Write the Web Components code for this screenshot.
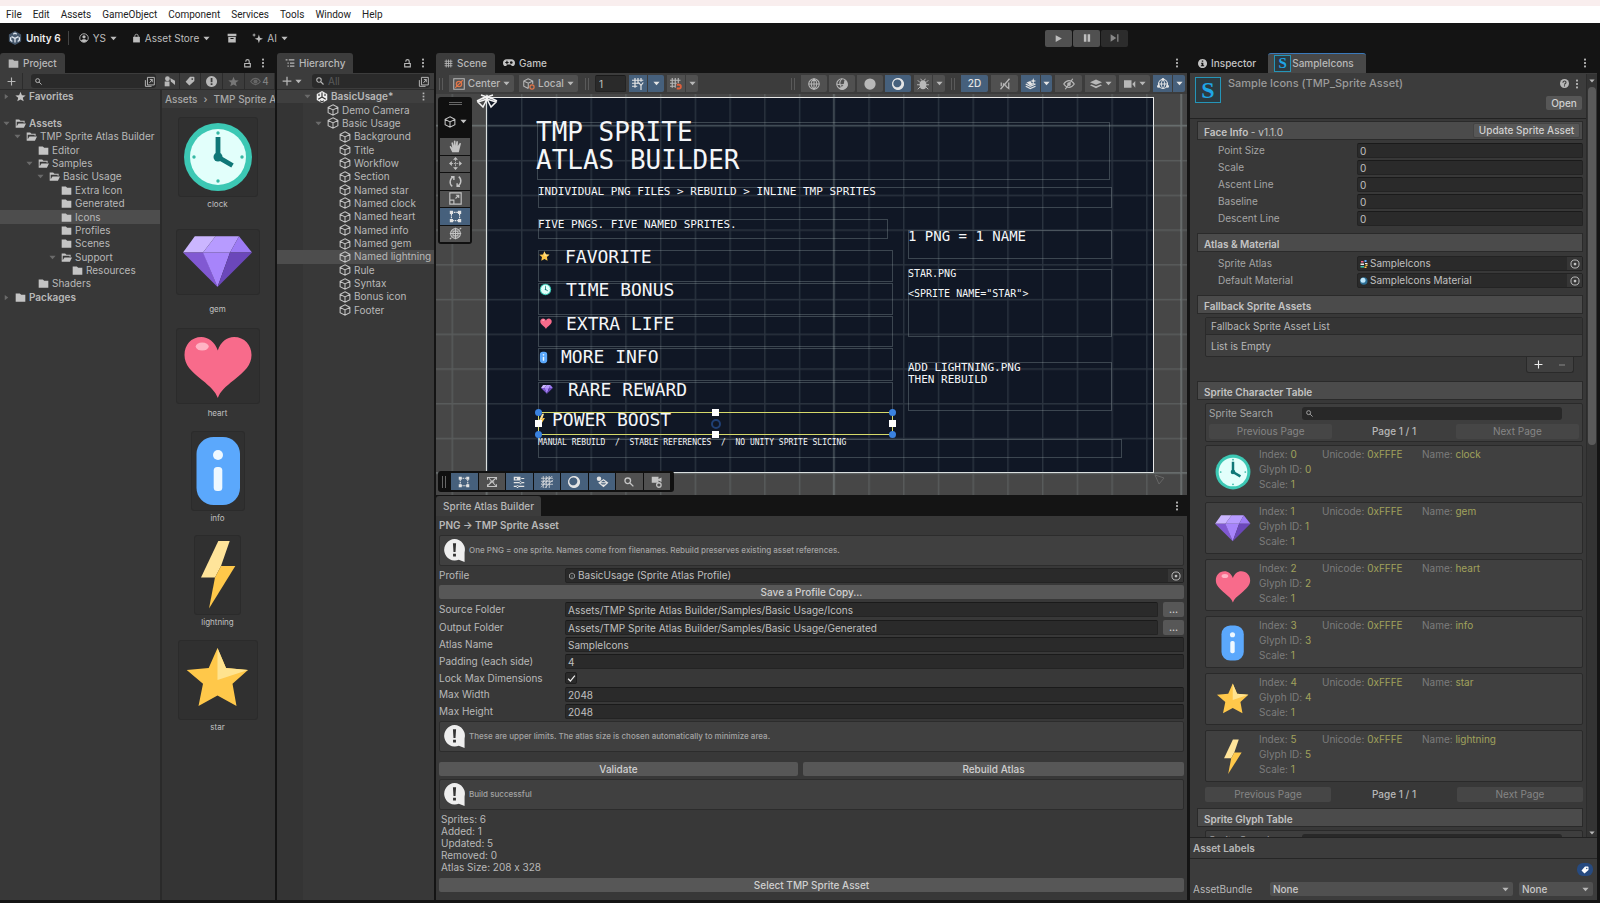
<!DOCTYPE html>
<html lang="en">
<head>
<meta charset="utf-8">
<title>BasicUsage - Unity 6</title>
<style>
html,body{margin:0;height:100%;background:#141414}
body{font:10px/13px Inter,"Liberation Sans",sans-serif;font-variant-ligatures:no-contextual;color:#b8b8b8;overflow:hidden}
</style>
</head>
<body>
<editor-app></editor-app>
<script>
const CSS = `
*{box-sizing:border-box}
:host{display:block}
button,input,select{font:inherit;color:inherit;margin:0;padding:0;border:0;background:none;border-radius:0;outline:0;min-width:0}
button{display:flex;align-items:center;justify-content:center;white-space:nowrap}
label,span,h2,h3{white-space:nowrap}
h2,h3{margin:0;font-size:10px}
input.f{display:block;width:100%;height:15px;background:#2a2a2a;border:1px solid #232323;border-top-color:#1a1a1a;border-radius:2px;padding:0 0 0 2px;color:#c0c0c0}
.b{background:#575757;border-radius:2px;color:#d0d0d0;font-weight:500}
.strip{display:flex;height:20px;background:#141414;align-items:center}
.grow{flex:1;min-width:0}
.bar{display:flex;background:#3c3c3c;align-items:center}
.i{display:flex;align-items:center}
`;
class Base extends HTMLElement{
  constructor(){super();this.attachShadow({mode:'open'})}
  connectedCallback(){this.shadowRoot.innerHTML='<style>'+CSS+(this.css?this.css():'')+'</style>'+this.view()}
}
const S='fill="none" stroke="currentColor" stroke-width="1.4"';
const ICONS={
 caret:'<path d="M1 4h14l-7 8z"/>',
 right:'<path d="M4 2v12l8-6z"/>',
 dots:'<rect x="6.5" y="1" width="3" height="3"/><rect x="6.5" y="6.5" width="3" height="3"/><rect x="6.5" y="12" width="3" height="3"/>',
 lock:'<path '+S.replace('1.4','2')+' d="M3 8h10v6H3zM5 5V4a3 3 0 0 1 6 0v4"/>',
 plus:'<path d="M7 1h2v6h6v2H9v6H7V9H1V7h6z"/>',
 minus:'<path d="M2 7h12v2H2z"/>',
 search:'<path fill="none" stroke="currentColor" stroke-width="2.2" d="M9.5 9.5L15 15M10.500 6a4.500 4.500 0 1 1-9 0a4.500 4.500 0 0 1 9 0z"/>',
 popout:'<path '+S+' d="M5 2h10v11H5zM2 6v9h9M8 10l4-5M8.500 5H12v4"/>',
 folder:'<path d="M1 2h6l2 2h6v10H1z"/>',
 open:'<path d="M1 14V2h5l2 2h6v3h-1.500V5.500h-10V12L5 8h11l-3 6z"/>',
 star:'<path d="M8 1l2 5 5.500.4-4.200 3.500L12.700 15 8 12.200 3.300 15l1.400-5.100L.5 6.400 6 6z"/>',
 cube:'<path '+S+' d="M8 1l6.500 3.500v7L8 15l-6.500-3.500v-7zM1.500 4.500L8 8l6.500-3.500M8 8v7"/>',
 unity:'<path d="M8 0l7 4v8l-7 4-7-4V4z"/><path fill="none" stroke="#333" stroke-width="1.500" d="M8 8V2M8 8l-5 3M8 8l5 3M4 3.500v3M12 3.500v3M5.500 13L8 14.500l2.500-1.500"/>',
 logo:'<path fill="#46586c" d="M8 0l7 4v8l-7 4-7-4V4z"/><path fill="none" stroke="#dfe6ee" stroke-width="1.500" d="M8 8.500V13M8 8.500L4 6.500M8 8.500l4-2M6 3.500l2-1 2 1M3 7v3.500L5 12M13 7v3.500L11 12"/>',
 user:'<circle cx="8" cy="8" r="6.800" '+S+'/><circle cx="8" cy="6" r="2.600"/><path d="M3 12.500c1-3.500 9-3.500 10 0a7 7 0 0 1-10 0z"/>',
 bag:'<path d="M2 5h12v10H2z"/><path '+S+' d="M5 6V3.500a3 3 0 0 1 6 0V6"/>',
 archive:'<path d="M1 1h14v4H1zM2 6.500h12V15H2zM5.500 8v1.500h5V8z" fill-rule="evenodd"/>',
 spark:'<path d="M10 2l1.500 5L16 8.500 11.500 10 10 15 8.500 10 4 8.500 8.500 7zM3 0l.8 2.200L6 3l-2.200.8L3 6l-.8-2.200L0 3l2.200-.8z"/>',
 play:'<path d="M3 2v12l11-6z"/>',
 pause:'<path d="M3 2h4v12H3zM9 2h4v12H9z"/>',
 step:'<path d="M1 2v12l9-6z"/><path d="M11.500 2h2v12h-2z"/>',
 shapes:'<rect x="1" y="8" width="7" height="7"/><circle cx="5" cy="4" r="3.500"/><path d="M9 3l7 4v6l-6-5z"/>',
 tag:'<path d="M8 1h6l1 1v6l-8 7-6-6zM11.500 3.500a1.300 1.300 0 1 0 .1 0z" fill-rule="evenodd"/>',
 alert:'<path fill-rule="evenodd" d="M8 0a8 8 0 1 0 .1 0zM6.800 3h2.600v6H6.800zM6.800 10.500h2.600V13H6.800z"/>',
 info:'<path fill-rule="evenodd" d="M8 0a8 8 0 1 0 .1 0zM6.700 2.500h2.600V5H6.700zM5.500 6.500h4V11H11v2H5v-2h1.500V8.500h-1z"/>',
 help:'<circle cx="8" cy="8" r="8"/><path fill="none" stroke="#3c3c3c" stroke-width="1.900" d="M5.300 6.500C5.300 2.500 11 3 10.600 6.400 10.400 8 8 8 8 10M8 11.300v2"/>',
 eye:'<path fill="none" stroke="currentColor" stroke-width="1.600" d="M1 8c4-6 10-6 14 0-4 6-10 6-14 0z"/><circle cx="8" cy="8" r="3"/>',
 eyeoff:'<path fill="none" stroke="currentColor" stroke-width="1.600" d="M1 8c4-6 10-6 14 0-4 6-10 6-14 0zM13 1L3 15"/><circle cx="8" cy="8" r="2.500"/>',
 list:'<path d="M1 2h3v2H1zM6 2h9v2H6zM4 7h2v2H4zM8 7h7v2H8zM4 12h2v2H4zM8 12h7v2H8z"/>',
 hash:'<path fill="none" stroke="currentColor" stroke-width="1.500" d="M4 1v14M8 1v14M12 1v14M1 4h14M1 8h14M1 12h14"/>',
 pad:'<path fill-rule="evenodd" d="M5 3h6c7 0 6 10 1 9l-2-2H6l-2 2C-1 13-2 3 5 3zM4.500 5v1.500H3V8h1.500v1.500H6V8h1.500V6.500H6V5zM11 5.500a1.800 1.800 0 1 0 .1 0z"/>',
 center:'<path '+S+' d="M1 1h14v14H1z"/><circle cx="8" cy="8" r="3.500" fill="none" stroke="#e0764a" stroke-width="1.800"/><path stroke="#e0764a" stroke-width="1.500" d="M3 13l10-10"/>',
 local:'<path '+S+' d="M7 1l6 3v4M7 14l-6-3V4l6-3M1 4l6 3 6-3M7 7v7"/><circle cx="12" cy="12" r="2.800" fill="none" stroke="#e0764a" stroke-width="1.600"/>',
 gridy:'<path fill="none" stroke="currentColor" stroke-width="1.600" d="M4 0v13M8 0v8M12 0v5M0 3h15M0 7h8M0 11h7M9 6l3 4 3-4M12 10v6"/>',
 magnet:'<path fill="none" stroke="currentColor" stroke-width="1.500" d="M3 0v13M7 0v13M11 0v7M0 3h14M0 7h9M0 11h7"/><path fill="none" stroke="#e0603c" stroke-width="2.400" d="M9 9h3a2.500 2.500 0 0 1 0 5H9"/>',
 globe:'<circle cx="8" cy="8" r="7" '+S+'/><path '+S+' d="M8 1v14M1 8h14M8 1c-5 4-5 10 0 14M8 1c5 4 5 10 0 14"/>',
 shade:'<circle cx="8" cy="8" r="7" '+S+'/><path d="M15 6a7 7 0 0 1-12 7c5 0 8-3 8-10 2 0 3 1 4 3z"/><path '+S+' d="M8 1c-4 4-4 7-1 11M1 8c4 2 7 1 11 0"/>',
 ball:'<circle cx="8" cy="8" r="7.500"/>',
 moon:'<path fill-rule="evenodd" d="M8 0a8 8 0 1 0 .1 0zM7 1.500a5.500 5.500 0 1 1-.1 0z"/><circle cx="8" cy="8" r="7" fill="none" stroke="currentColor"/>',
 bug:'<ellipse cx="8" cy="9" rx="4.500" ry="6"/><path fill="none" stroke="currentColor" stroke-width="1.300" d="M4 6L1 3M12 6l3-3M4 9H0M12 9h4M4 12l-3 3M12 12l3 3M6 3L5 1M10 3l1-2"/>',
 mute:'<path fill="none" stroke="currentColor" stroke-width="1.700" d="M14 1L2 15M3 6v5M6 7v3M9 9v2M13 6v8l-4-3"/>',
 fx:'<path fill="none" stroke="currentColor" stroke-width="1.600" d="M1 11l6 3 7-3M1 8l6 3 7-3"/><path d="M2 6l5-2 2 3 5 0-7 3zM11 0l1 3 3 1-3 1-1 3-1-3-3-1 3-1z"/>',
 layers:'<path d="M8 2l8 3.500L8 9 0 5.500z"/><path d="M2 8.500l6 2.500 6-2.500 2 1L8 13.500 0 9.500z"/>',
 camera:'<path d="M0 3h10v10H0zM11 8l4-4v9z"/>',
 gizmo:'<circle cx="8" cy="8" r="6" fill="none" stroke="currentColor" stroke-width="1.600"/><path fill="none" stroke="currentColor" stroke-width="1.300" d="M8 2c-3 4-3 8 0 12M2 8h12M8 2c3 4 3 8 0 12"/><circle cx="8" cy="1.800" r="1.800"/><circle cx="2" cy="11" r="2"/><circle cx="14" cy="11" r="2"/>',
 hand:'<path d="M4 15L1 9c-.5-1.500 1-2 1.700-1L4 9.500 3 4c0-1.500 1.700-1.500 2-.2L6 7V1.500c0-1.300 2-1.300 2 0V7l1-5c.3-1.300 2-1 2 .3L10.800 7.500 13 4c.8-1 2-.2 1.600 1L12 15z"/>',
 move:'<path d="M8 0l3 3.500H5zM8 16l3-3.500H5zM0 8l3.500-3v6zM16 8l-3.500-3v6z"/><path stroke="currentColor" stroke-dasharray="2 1" d="M8 3v10M3 8h10"/>',
 rotate:'<path fill="none" stroke="currentColor" stroke-width="1.700" d="M4 14A7 7 0 0 1 6 2M12 2a7 7 0 0 1-2 12M2.500 2H6v4M13.500 14H10v-4"/>',
 scale:'<path '+S+' d="M1 1h14v14H1zM1 10h5v5M8 8l4-4M8.500 4H12v3.500"/>',
 rect:'<path '+S+' stroke-dasharray="2 1" d="M3 3h10v10H3z"/><path d="M1 1h4v4H1zM11 1h4v4h-4zM1 11h4v4H1zM11 11h4v4h-4z"/>',
 transform:'<circle cx="8" cy="8" r="6" '+S+'/><path '+S+' d="M8 1v14M1 8h14M5 5h6v6H5zM13 3l2-2M1 15l2-2"/>',
 sigma:'<path '+S+' d="M2 5V2h12v3M2 11v3h12v-3M2 13L13 3M4 3l9 10M5 8h6"/>',
 sliders:'<path fill-rule="evenodd" d="M1 1h9v5H1zM3 2.500h2v2H3zM11 2.500h4v1.500h-4zM1 8h14v1.500H1zM9 7h2v4H9zM1 13h14v1.500H1zM5 12h2v4H5z"/>',
 hatch:'<path fill="none" stroke="currentColor" d="M3 0v16M7 0v16M11 0v16M0 3h16M0 7h16M0 11h16M0 15L15 0M5 16L16 5M1 10L10 1"/>',
 diamonds:'<circle cx="4" cy="3.500" r="3"/><path '+S+' d="M10 5l5.500 4-5.500 5-6-5zM4 9h11M7 12h6"/>',
 camgear:'<path d="M1 1h9v8H1zM10 4l4-2v6l-4-2z"/><circle cx="10.500" cy="12" r="3" fill="none" stroke="currentColor" stroke-width="1.700"/>',
 target:'<circle cx="8" cy="8" r="6.500" fill="none" stroke="currentColor" stroke-width="1.500"/><circle cx="8" cy="8" r="2.200"/>',
 check:'<path fill="none" stroke="currentColor" stroke-width="2.200" d="M2 8.500l4 4L14 3"/>',
 so:'<path '+S+' stroke="#3f6f74" d="M3 5l5-3 5 3v6l-5 3-5-3z"/><path fill="#4b5658" d="M6 6h4v1.500H7.500V9H10v3H6v-1.500h2.500V10H6z"/>',
 atlas:'<path fill="#eee" d="M1 7h7v3H1zM10 6h5v2h-5z"/><path fill="#f86b8b" d="M2 2h5v3H2z"/><path fill="#3cc8b4" d="M1 12h7v3H1z"/><path fill="#5ba8fc" d="M9 0h4v4H9z"/><path fill="#ffc84a" d="M11 9h4v3h-4zM9 13h4v3H9z"/>',
 material:'<circle cx="7.500" cy="8" r="7.500" fill="#2c6f96"/><circle cx="6" cy="6.500" r="5" fill="#bfe6fa"/>',
 bubble:'<path fill="#eee" d="M8 0a7.500 7.500 0 0 1 7 9.500V16l-4-1.500A7.500 7.500 0 1 1 8 0z"/><path fill="#333" d="M6.900 3h2.200l-.4 6H7.300zM7 10.200h2v2H7z"/>'
};
class UiIcon extends Base{
  css(){const s=this.getAttribute('s')||12;return `:host{display:inline-flex;flex:none;width:${s}px;height:${s}px}svg{width:100%;height:100%;overflow:visible;fill:currentColor}`}
  view(){return `<svg viewBox="0 0 16 16" aria-hidden="true">${ICONS[this.getAttribute('n')]}</svg>`}
}
customElements.define('ui-icon',UiIcon);
const ic=(n,s=12,c='')=>`<ui-icon n="${n}" s="${s}"${c?` style="color:${c}"`:''}></ui-icon>`;

const ART={
 clock:[78,78,'<circle cx="39" cy="39" r="34" fill="#3cc8b4"/><circle cx="39" cy="39" r="28" fill="#e2fffb"/><g fill="#36b8a4"><circle cx="39" cy="15" r="1.700"/><circle cx="63" cy="39" r="1.700"/><circle cx="39" cy="63" r="1.700"/><circle cx="15" cy="39" r="1.700"/></g><path d="M39 19v20l14.500 8.500" fill="none" stroke="#0f7777" stroke-width="4.800"/><circle cx="39" cy="39" r="4.500" fill="#0f7777"/>',[40,40],[13,13]],
 gem:[82,64,'<path fill="#cbb6ff" d="M6 22.600L17.800 6.300H38.500L26 22.600z"/><path fill="#b79bff" d="M38.500 6.300H62L53 22.600H26z"/><path fill="#9d7bf5" d="M62 6.300L75 22.600H53z"/><path fill="#8159d2" d="M6 22.600h20.500L40.500 57z"/><path fill="#a784fb" d="M26 22.600h27L40.500 57z"/><path fill="#6b47ba" d="M53 22.600h22L40.500 57z"/>',[42,33],[14,11]],
 heart:[82,74,'<path fill="#f86b8b" d="M40.800 21.500C38 13 31 8 24.500 8 14 8 7.500 16 7.500 26c0 10 6.500 16 17.500 25 8 6.500 13.500 11.500 15.800 18 2.300-6.500 7.800-11.500 16.200-18 11-9 17.500-15 17.500-25C74.500 16 67.500 8 57 8c-7 0-13.500 5-16.200 13.500z"/><ellipse cx="25.200" cy="17.500" rx="6.500" ry="4" fill="#ffb3c4"/>',[42,38],[14,13]],
 info:[52,78,'<rect x="4.500" y="5" width="43.500" height="68" rx="17" fill="#5ba8fc"/><circle cx="26" cy="23" r="5" fill="#eef8ff"/><rect x="21.700" y="35" width="8.600" height="24" rx="3.500" fill="#eef8ff"/>',[27,40],[9,13]],
 lightning:[45,78,'<path fill="#ffe49a" d="M23.300 5h11.400L26 30l-6 11.500H6z"/><path fill="#ffc84a" d="M26 30h14.300L14 72.500l6-31z"/>',[23,40],[8,13]],
 star:[78,78,'<path fill="#ffc84a" d="M38.500 7L47 27l22 2-15.500 13.700 4 22.300-19-10.500-19 10.500 4.500-22.300L7.700 29l22-2z"/><path fill="#ffe38f" d="M38.500 7L47 27l22 2-30.500 10z"/>',[40,40],[13,13]]
};
class SpriteArt extends Base{
  dims(){const a=ART[this.getAttribute('n')],z=this.getAttribute('z');return z==='m'?a[3]:z==='s'?a[4]:a}
  css(){const d=this.dims();return `:host{width:${d[0]}px;height:${d[1]}px}svg{display:block;width:100%;height:100%}`}
  view(){const a=ART[this.getAttribute('n')];return `<svg viewBox="0 0 ${a[0]} ${a[1]}" role="img" aria-label="${this.getAttribute('n')}">${a[2]}</svg>`}
}
customElements.define('sprite-art',SpriteArt);

class AssetLogo extends Base{
  css(){const s=+this.getAttribute('s');return `:host{display:flex;flex:none;align-items:center;justify-content:center;width:${s}px;height:${s}px;border:1px solid #2595b8;background:#2c3a40;color:#1fa6e6;font:bold ${s-2}px/${s-2}px "Liberation Serif",serif}`}
  view(){return '<span>S</span>'}
}
customElements.define('asset-logo',AssetLogo);

class DockTab extends Base{
  css(){return `:host{display:flex;flex:none;align-items:center;gap:4px;height:20px;padding:0 8px;color:#c4c4c4;font-weight:500}
  :host([on]){background:#3c3c3c;border-radius:3px 3px 0 0;color:#b8b8b8}:host([focus]){border-top:1px solid #3a79bb;background:#484848}`}
  view(){return '<slot></slot>'}
}
customElements.define('dock-tab',DockTab);

class MenuBar extends Base{
  css(){return `:host{border-top:6px solid #f9eeee;background:#fff;color:#222;font:10px/17px Roboto,sans-serif;height:23px}
  nav{display:flex;gap:11px;padding-left:6px}a{color:inherit;text-decoration:none}`}
  view(){return '<nav>'+['File','Edit','Assets','GameObject','Component','Services','Tools','Window','Help'].map(t=>`<a href="#">${t}</a>`).join('')+'</nav>'}
}
customElements.define('menu-bar',MenuBar);

class MainToolbar extends Base{
  css(){return `:host{display:flex;height:30px;align-items:center;background:#141414;color:#bdbdbd}
  .l{display:flex;align-items:center;flex:1;padding-left:8px;gap:15px}
  .l button{gap:4px}.l b{color:#eee;margin-left:4px;font-weight:600}
  .u{padding-right:7px;border-right:1px solid #444;line-height:10px}
  .p{display:flex;gap:1px;flex:0 0 555px}.p button{width:27px;height:17px;background:#505050;border-radius:2px}.p button:last-child{background:#2c2c2c;color:#888}
  .l button:nth-of-type(1){margin-left:-5px}.l button:nth-of-type(3){margin-left:2px}`}
  view(){return `<div class="l"><span class="i u">${ic('logo',14)}<b>Unity 6</b></span><button>${ic('user',10)}YS ${ic('caret',7)}</button><button>${ic('bag',9)}Asset Store ${ic('caret',7)}</button><button aria-label="Package Manager">${ic('archive',10)}</button><button>${ic('spark',11)}AI ${ic('caret',7)}</button></div>
  <div class="p"><button aria-label="Play">${ic('play',9)}</button><button aria-label="Pause">${ic('pause',10)}</button><button aria-label="Step">${ic('step',10)}</button></div>`}
}
customElements.define('main-toolbar',MainToolbar);

class TreeRow extends Base{
  css(){return `:host{display:flex;align-items:center;min-height:0;overflow:hidden;padding-left:${this.getAttribute('x')}px;white-space:nowrap;font-weight:${this.hasAttribute('bold')?600:400}}
  :host([sel]){background:#4d4d4d}.c{width:12px;display:flex;color:#6a6a6a}ui-icon{margin-right:3px}`}
  view(){const c=this.getAttribute('c'),i=this.getAttribute('i');return `<span class="c">${c?ic(c,7):''}</span>${i?ic(i,this.getAttribute('s')||11,this.getAttribute('col')||'#c4c4c4'):''}<slot></slot>`}
}
customElements.define('tree-row',TreeRow);

const INDENT=[3,14,26,37,49,60];
class ProjectPanel extends Base{
  css(){return `:host{display:flex;flex-direction:column;background:#383838;min-width:0;overflow:hidden}
  .strip{padding-right:7px;gap:6px}.bar{height:17px;border-bottom:1px solid #2c2c2c}
  .bar button{height:16px;border-right:1px solid #2c2c2c}
  .s{display:flex;align-items:center;background:#2a2a2a;border-radius:3px;height:14px;margin:0 3px 0 8px;padding:0 1px 0 4px;width:125px}.s input{flex:1}
  .cols{display:flex;flex:1;min-height:0}.tree{display:grid;grid-auto-rows:1fr;height:214px}
  .side{width:162px;flex:none;border-right:2px solid #2a2a2a}
  .g{flex:1;min-width:0;background:#343434}
  .crumb{height:18px;display:flex;align-items:center;gap:6px;padding-left:3px;background:#3c3c3c;overflow:hidden;font-weight:500;color:#a8a8a8}
  .tiles{display:grid;grid-auto-rows:1fr;height:627px;margin:8px 2px 0 0}
  figure{margin:0;display:flex;flex-direction:column;align-items:center;font-size:8px;line-height:12px;color:#c0c0c0}
  .box{height:82px;display:flex;align-items:center}.box sprite-art{background:#303030;box-shadow:0 0 0 1px #2b2b2b;border-radius:2px}`}
  view(){
   const r=[[0,'right','star','Favorites',1],null,[0,'caret','open','Assets',1],[1,'caret','open','TMP Sprite Atlas Builder'],[2,'','folder','Editor'],[2,'caret','open','Samples'],[3,'caret','open','Basic Usage'],[4,'','folder','Extra Icon'],[4,'','folder','Generated'],[4,'','folder','Icons',0,1],[4,'','folder','Profiles'],[4,'','folder','Scenes'],[4,'caret','open','Support'],[5,'','folder','Resources'],[2,'','folder','Shaders'],[0,'right','folder','Packages',1]];
   return `<div class="strip"><dock-tab on>${ic('folder',11)}Project</dock-tab><span class="grow"></span>${ic('lock',9)}${ic('dots',10)}</div>
   <div class="bar"><button style="width:23px" aria-label="Create">${ic('plus',9)}</button><div class="s">${ic('search',7)}<input aria-label="Search project">${ic('popout',11)}</div>
   <button style="width:21px" aria-label="Type">${ic('shapes',11)}</button><button style="width:21px" aria-label="Label">${ic('tag',10)}</button><button style="width:22px" aria-label="Log">${ic('alert',11)}</button><button style="width:22px;color:#777" aria-label="Favorite">${ic('star',11)}</button><button class="grow" style="color:#888;gap:1px">${ic('eye',11,'#666')}4</button></div>
   <div class="cols"><div class="side"><div class="tree">${r.map(a=>a?`<tree-row x="${INDENT[a[0]]}" c="${a[1]}" i="${a[2]}" s="11"${a[4]?' bold':''}${a[5]?' sel':''}>${a[3]}</tree-row>`:'<span></span>').join('')}</div></div>
   <div class="g"><div class="crumb"><span>Assets</span><span>›</span><span>TMP Sprite Atlas</span></div><div class="tiles">${Object.keys(ART).map(k=>`<figure><div class="box"><sprite-art n="${k}"></sprite-art></div><figcaption>${k}</figcaption></figure>`).join('')}</div></div></div>`}
}
customElements.define('project-panel',ProjectPanel);

class HierarchyPanel extends Base{
  css(){return `:host{display:flex;flex-direction:column;background:linear-gradient(90deg,#343434 26px,#383838 26px);min-width:0;overflow:hidden}
  .strip{padding-right:6px;gap:6px}.bar{height:17px;border-bottom:1px solid #2c2c2c;padding:0 4px 0 5px;gap:3px}
  .s{display:flex;align-items:center;gap:4px;background:#2a2a2a;border-radius:3px;height:14px;padding:0 1px 0 4px;margin-left:7px;flex:1}.s input{flex:1;width:40px}input::placeholder{color:#5a5a5a;opacity:1}
  .t{display:grid;grid-auto-rows:1fr;height:227px;flex:none}.h{display:flex;background:#3f3f3f;align-items:center;padding-right:6px}.h tree-row{flex:1}`}
  view(){
   const r=['Background','Title','Workflow','Section','Named star','Named clock','Named heart','Named info','Named gem','Named lightning','Rule','Syntax','Bonus icon','Footer'];
   return `<div class="strip"><dock-tab on>${ic('list',10)}Hierarchy</dock-tab><span class="grow"></span>${ic('lock',9)}${ic('dots',10)}</div>
   <div class="bar">${ic('plus',10)}${ic('caret',7)}<div class="s">${ic('search',8)}<input placeholder="All" aria-label="Search hierarchy">${ic('popout',11)}</div></div>
   <div class="t"><div class="h"><tree-row x="27" c="caret" i="unity" s="12" col="#eee" bold>BasicUsage*</tree-row>${ic('dots',9)}</div>
   <tree-row x="38" i="cube" s="12">Demo Camera</tree-row><tree-row x="38" c="caret" i="cube" s="12">Basic Usage</tree-row>${r.map(t=>`<tree-row x="50" i="cube" s="12"${t==='Named lightning'?' sel':''}>${t}</tree-row>`).join('')}</div>`}
}
customElements.define('hierarchy-panel',HierarchyPanel);

class ToolGroup extends Base{
  css(){return `:host{display:flex;gap:1px;flex:none;height:17px}button{background:#505050;height:100%;gap:3px;font-weight:500}:host([on]) button{background:#46607c;color:#e4e4e4}
  button:first-child{border-radius:2px 0 0 2px}button:last-child{border-radius:0 2px 2px 0}`}
  view(){return this.getAttribute('p').split('|').map(p=>{const [w,...r]=p.split(',');return `<button style="width:${w}px" aria-label="${r[0].replace('=','')}">${r.map(x=>x[0]==='='?x.slice(1):ic(x,x==='caret'?7:12)).join('')}</button>`}).join('')}
}
customElements.define('tool-group',ToolGroup);
const tg=(p,on)=>`<tool-group p="${p}"${on?' on':''}></tool-group>`;

class SceneView extends Base{
  css(){return `:host{position:relative;overflow:hidden;background:#474747;height:100%}
  .board{position:absolute;left:50px;top:3px;width:668px;height:376px;background:#101725;border:1px solid #e8e8e8}
  svg.g{position:absolute;inset:0;width:100%;height:100%}
  .n{position:absolute;border:1px solid rgba(190,205,205,.26)}
  .n.sel{border-color:#d5d96a}
  .t{position:absolute;white-space:pre;color:#f4f6f8;font-family:"DejaVu Sans Mono","Liberation Mono",monospace}
  sprite-art{position:absolute}
  .hd{position:absolute;width:7px;height:7px;background:#fff}.hd.c{background:#3a82e0;border-radius:50%}.hd.o{width:10px;height:10px;background:none;border:2px solid #1f3f74;border-radius:50%}
  .v{position:absolute;left:2px;top:3px;width:34px;height:147px;background:#101010;border-radius:3px;padding:5px 2px 2px;display:flex;flex-direction:column;color:#c4c4c4}
  .v .gr{width:13px;height:3px;border:1px solid #666;border-width:1px 0;align-self:center}.v .m{display:flex;align-items:center;justify-content:center;gap:4px;flex:1}
  .v .k{display:grid;grid-auto-rows:1fr;gap:1px;height:104px}.v .k button,.h .k button{background:#505050;height:100%}
  .k .on{background:#46607c!important;color:#e4e4e4}
  .h{position:absolute;left:2px;bottom:3px;width:236px;height:21px;background:#101010;border-radius:3px;padding:2px 4px 2px 4px;display:flex;align-items:center;justify-content:space-between;color:#c4c4c4}
  .h .gr{width:4px;height:12px;border:1px solid #666;border-width:0 1px}.h .k{display:grid;grid-auto-flow:column;grid-auto-columns:1fr;gap:1px;width:219px;height:17px}`}
  view(){
   const boxes=[[101,28,573,58],[102,93,574,21],[102,125,350,20],[102,156,355,32],[102,189,355,32],[102,222,355,31],[102,254,355,33],[102,288,355,31],[102,345,584,19],[472,136,204,29],[472,175,204,68],[472,268,204,49],[102,318,355,23,'sel']];
   const texts=[[100,24,26,28,'TMP SPRITE\nATLAS BUILDER'],[102,92,11,12,'INDIVIDUAL PNG FILES &gt; REBUILD &gt; INLINE TMP SPRITES'],[102,125,11,12,'FIVE PNGS. FIVE NAMED SPRITES.'],[129,153,18,20,'FAVORITE'],[130,186,18,20,'TIME BONUS'],[130,220,18,20,'EXTRA LIFE'],[125,253,18,20,'MORE INFO'],[132,286,18,20,'RARE REWARD'],[116,316,18,20,'POWER BOOST'],[102,344,8,10,'MANUAL REBUILD  /  STABLE REFERENCES  /  NO UNITY SPRITE SLICING'],[472,134,14,16,'1 PNG = 1 NAME'],[472,174,10,12,'STAR.PNG'],[472,194,10,12,'&lt;SPRITE NAME="STAR"&gt;'],[472,268,11,12,'ADD LIGHTNING.PNG\nTHEN REBUILD']];
   const arts=[['star',102,156],['clock',103,189],['heart',103,223],['info',103,257],['gem',104,290],['lightning',102,319]];
   return `<div class="board"></div>
   <svg class="g" aria-hidden="true"><defs><pattern id="a" x="50.300" y="31.200" width="34.730" height="34.730" patternUnits="userSpaceOnUse"><path d="M0 .7H35M.7 0V35" stroke="#b4c6c6" stroke-opacity=".16" stroke-width="1.400" fill="none"/></pattern><pattern id="b" x="49.500" y="30.700" width="347.300" height="347.300" patternUnits="userSpaceOnUse"><path d="M0 .8H348M.8 0V348" stroke="#b4c6c6" stroke-opacity=".22" stroke-width="1.600" fill="none"/></pattern></defs>
   <rect width="100%" height="100%" fill="url(#a)"/><rect width="100%" height="100%" fill="url(#b)"/>
   <g fill="none" stroke="#f2f2f2" stroke-width="1.500"><path d="M51 1v6M45 1l12 4M57 1L45 5M51 5l-9 3 5 5zM51 5l9 3-5 5zM41 7l8-4M61 7l-8-4"/></g><path d="M719 381l4 9 5-6z" fill="none" stroke="#666"/></svg>
   ${boxes.map(b=>`<div class="n ${b[4]||''}" style="left:${b[0]}px;top:${b[1]}px;width:${b[2]}px;height:${b[3]}px"></div>`).join('')}
   ${arts.map(a=>`<sprite-art n="${a[0]}" z="s" style="left:${a[1]}px;top:${a[2]}px"></sprite-art>`).join('')}
   ${texts.map(t=>`<div class="t" style="left:${t[0]}px;top:${t[1]}px;font-size:${t[2]}px;line-height:${t[3]}px">${t[4]}</div>`).join('')}
   ${[[99,315,'c'],[453,315,'c'],[99,337,'c'],[453,337,'c'],[276,315,''],[276,337,''],[99,326,''],[453,326,''],[275,325,'o']].map(h=>`<i class="hd ${h[2]}" style="left:${h[0]}px;top:${h[1]}px"></i>`).join('')}
   <div class="v"><span class="gr"></span><div class="m">${ic('cube',12)}${ic('caret',7)}</div><div class="k">${['hand','move','rotate','scale','rect','transform'].map(n=>`<button class="${n==='rect'?'on':''}" aria-label="${n}">${ic(n,13)}</button>`).join('')}</div></div>
   <div class="h"><span class="gr"></span><div class="k">${['rect','sigma','sliders','hatch','moon','diamonds','search','camgear'].map((n,i)=>`<button class="${[0,2,3,4,5].includes(i)?'on':''}" aria-label="${n}">${ic(n,n==='search'?10:12)}</button>`).join('')}</div></div>`}
}
customElements.define('scene-view',SceneView);

class ScenePanel extends Base{
  css(){return `:host{display:flex;flex-direction:column;min-height:0;background:#3c3c3c}
  .strip{padding-right:5px}.bar{height:21px;padding:0 2px 0 3px;flex:none}.gr{width:4px;height:12px;border:1px solid #5a5a5a;border-width:0 1px;margin:0 6px}
  .bar tool-group{margin-right:3px}input.f{width:31px;height:17px;margin-right:3px;padding-left:3px}scene-view{flex:1;min-height:0}
  .r{display:flex;gap:2px;margin-right:3px}.r tool-group{margin:0}.bar tool-group:last-child{margin-right:0}`}
  view(){return `<div class="strip"><dock-tab on>${ic('hash',9)}Scene</dock-tab><dock-tab>${ic('pad',12)}Game</dock-tab><span class="grow"></span>${ic('dots',10)}</div>
  <div class="bar"><span class="gr" style="margin-left:0"></span>${tg('65,center,=Center,caret')}<span style="width:2px"></span>${tg('59,local,=Local,caret')}<span class="gr" style="margin-left:4px"></span><input class="f" value="1" aria-label="Grid size">${tg('18,gridy|16,caret',1)}${tg('18,magnet|12,caret')}<span class="grow"></span><span class="gr"></span>
  <div class="r">${tg('26,globe')}${tg('26,shade')}${tg('26,ball')}${tg('26,moon',1)}</div>${tg('18,bug|12,caret')}<span class="gr" style="margin-left:3px"></span>${tg('27,=2D',1)}${tg('27,mute')}${tg('19,fx|11,caret',1)}${tg('27,eyeoff')}${tg('31,layers,caret')}${tg('31,camera,caret')}${tg('19,gizmo|12,caret',1)}</div>
  <scene-view></scene-view>`}
}
customElements.define('scene-panel',ScenePanel);

class HelpBox extends Base{
  css(){return `:host{display:flex;align-items:center;gap:3px;height:31px;padding-left:3px;background:#404040;border:1px solid #2c2c2c;border-radius:2px;font-size:8px;font-weight:500;color:#a4a4a4}`}
  view(){return ic('bubble',23)+'<span><slot></slot></span>'}
}
customElements.define('help-box',HelpBox);

class ObjectField extends Base{
  css(){return `:host{display:flex;align-items:center;height:15px;background:#2a2a2a;border:1px solid #232323;border-radius:2px;padding-left:2px;gap:2px;color:#c0c0c0;min-width:0}button{width:15px;height:13px;background:#363636}`}
  view(){return ic(this.getAttribute('i'),8)+`<span class="grow"><slot></slot></span><button aria-label="Select object">${ic('target',10)}</button>`}
}
customElements.define('object-field',ObjectField);

class AtlasBuilder extends Base{
  css(){return `:host{background:#383838}
  .strip{height:21px;padding-right:5px}.strip dock-tab{margin-top:1px}dock-tab{padding:0 7px}
  .w{padding:0 3px 8px;display:flex;flex-direction:column}h2{line-height:19px;font-weight:600}
  .r{display:grid;grid-template-columns:126px 1fr;align-items:center;height:15px;margin-top:2px}
  .r.d{grid-template-columns:126px 1fr 21px;margin-top:3px}.r.d input{width:calc(100% - 5px)}.d button{height:15px}
  .r.lk{height:14px}
  .b{height:14px}.two{display:grid;grid-template-columns:359fr 381fr;gap:5px;margin:10px 0 3px}
  .ck{position:relative;width:12px;height:12px;background:#2a2a2a;border:1px solid #1e1e1e;border-radius:2px;display:flex;align-items:center;justify-content:center;color:#eee}
  .ck input{appearance:none;position:absolute;inset:0}pre{margin:3px 0 5px;padding-left:2px;font:inherit;line-height:12px}`}
  view(){
   const f=(l,v,id)=>`<div class="r"><label for="${id}">${l}</label><input class="f" id="${id}" value="${v}"></div>`;
   const d=(l,v,id)=>`<div class="r d"><label for="${id}">${l}</label><input class="f" id="${id}" value="${v}"><button class="b">...</button></div>`;
   return `<div class="strip"><dock-tab on>Sprite Atlas Builder</dock-tab><span class="grow"></span>${ic('dots',10)}</div>
   <div class="w"><h2>PNG → TMP Sprite Asset</h2><help-box>One PNG = one sprite. Names come from filenames. Rebuild preserves existing asset references.</help-box>
   <div class="r"><span>Profile</span><object-field i="so">BasicUsage (Sprite Atlas Profile)</object-field></div>
   <button class="b" style="margin-top:2px">Save a Profile Copy...</button>
   ${d('Source Folder','Assets/TMP Sprite Atlas Builder/Samples/Basic Usage/Icons','src')}${d('Output Folder','Assets/TMP Sprite Atlas Builder/Samples/Basic Usage/Generated','out')}
   ${f('Atlas Name','SampleIcons','an')}${f('Padding (each side)','4','pad')}
   <div class="r lk"><label for="lock">Lock Max Dimensions</label><span class="ck"><input type="checkbox" id="lock" checked>${ic('check',9)}</span></div>
   ${f('Max Width','2048','mw')}${f('Max Height','2048','mh')}
   <help-box style="margin-top:2px">These are upper limits. The atlas size is chosen automatically to minimize area.</help-box>
   <div class="two"><button class="b">Validate</button><button class="b">Rebuild Atlas</button></div>
   <help-box>Build successful</help-box><pre>Sprites: 6
Added: 1
Updated: 5
Removed: 0
Atlas Size: 208 x 328</pre><button class="b">Select TMP Sprite Asset</button></div>`}
}
customElements.define('atlas-builder',AtlasBuilder);

class SectionHead extends Base{
  css(){return `:host{display:flex;align-items:center;justify-content:space-between;height:19px;background:#4b4b4b;border:1px solid #2a2a2a;padding:3px 2px 0 6px;font-weight:600;color:#c4c4c4}`}
  view(){return '<span><slot></slot></span><slot name="end"></slot>'}
}
customElements.define('section-head',SectionHead);

class SpriteEntry extends Base{
  css(){return `:host{display:grid;grid-template:15px 15px 15px/53px 63px 100px 1fr;height:52px;border:1px solid #2a2a2a;border-radius:2px;background:#404040;color:#7c7c7c;line-height:15px;margin-bottom:5px;padding-top:1px}
  sprite-art{place-self:center;grid-row:1/4;margin-top:4px}b{font-weight:400;color:#a0a25c}span{grid-row:1}.x{grid-column:2/5;grid-row:2}.y{grid-column:2;grid-row:3}`}
  view(){const i=this.getAttribute('i'),n=this.getAttribute('n');return `<sprite-art n="${n}" z="m"></sprite-art><span>Index: <b>${i}</b></span><span>Unicode: <b>0xFFFE</b></span><span>Name: <b>${n}</b></span><span class="x">Glyph ID: <b>${i}</b></span><span class="y">Scale: <b>1</b></span>`}
}
customElements.define('sprite-entry',SpriteEntry);

class PageNav extends Base{
  css(){return `:host{display:grid;grid-template-columns:1fr 1fr 1fr;height:15px;align-items:center;text-align:center}button{height:15px;background:#464646;color:#858585;border-radius:2px}span{font-weight:500}`}
  view(){return '<button disabled>Previous Page</button><span>Page 1 / 1</span><button disabled>Next Page</button>'}
}
customElements.define('page-nav',PageNav);

class InspectorPanel extends Base{
  css(){return `:host{display:flex;flex-direction:column;background:#383838;min-width:0;min-height:0}
  .strip{padding-right:7px}.head{display:flex;height:46px;flex:none;background:#3c3c3c;border-bottom:1px solid #222;padding:4px 15px 0 5px}
  .head h2{font-size:11px;font-weight:500;color:#9a9a9a;flex:1;margin-left:7px}
  .e{display:flex;flex-direction:column;align-items:flex-end;gap:6px}.e .b{width:36px;height:14px}
  .body{display:flex;flex:1;min-height:0;position:relative}.c{flex:1;min-width:0;overflow:hidden;padding:2px 14px 0 7px}
  .sb{position:absolute;right:0;top:-45px;bottom:0;width:11px;background:#343434;border-left:1px solid #2c2c2c;display:flex;flex-direction:column;align-items:center;padding:4px 0 1px}
  .sb i{width:8px;height:358px;border-radius:4px;background:#5a5a5a;margin:3px 0 auto}
  .r{display:grid;grid-template-columns:139px 1fr;align-items:center;height:15px;margin:0 0 2px 21px;color:#a4a4a4}
  .rows{padding:3px 0 5px}.rows.m{padding:4px 0 5px}.up{height:15px;width:107px;border:1px solid #444;margin-top:-3px}
  .lst{margin:3px 0 0 8px;border:1px solid #2a2a2a;border-radius:2px;background:#404040;height:40px}.lst div{padding-left:5px;line-height:22px}.lst div:first-child{background:#353535;line-height:16px;border-bottom:1px solid #2a2a2a}
  .pm{display:flex;justify-content:space-around;align-items:center;width:48px;height:16px;margin:0 9px 8px auto;background:#404040;border:1px solid #2a2a2a;border-top:0;border-radius:0 0 3px 3px}
  .sr{margin:3px 0 3px 8px;border:1px solid #2a2a2a;border-radius:2px;background:#3e3e3e;padding:3px 3px 2px}.q{display:grid;grid-template-columns:93px 1fr;padding-right:17px;align-items:center;height:13px;margin-bottom:4px;color:#a4a4a4}
  .q span{display:flex;align-items:center;background:#282828;height:13px;border-radius:3px;padding-left:4px}.q input{flex:1}
  .tb{margin:0 0 6px 8px}
  .al{background:#3c3c3c;border-top:1px solid #222;height:63px;flex:none}.al h3{line-height:20px;padding-left:3px;border-bottom:1px solid #262626;font-weight:600}
  .tg{display:flex;justify-content:flex-end;padding:4px 4px 0 0;height:22px}.tg button{width:16px;height:13px;border-radius:6px;background:#264a80;color:#fff}
  .ab{display:grid;grid-template-columns:77px 1fr 74px;align-items:center;padding:1px 4px 0 3px}.sel{position:relative;display:flex;align-items:center}.ab select{appearance:none;width:100%;height:14px;background:#505050;border-radius:2px;padding-left:3px;font-weight:500;color:#c8c8c8}.sel ui-icon{position:absolute;right:4px;pointer-events:none}.sel.w{margin-right:6px}`}
  view(){
   return `<div class="strip"><dock-tab>${ic('info',9)}Inspector</dock-tab><span style="width:4px"></span><dock-tab on focus style="gap:1px;padding-left:6px;padding-right:12px"><asset-logo s="17"></asset-logo>SampleIcons</dock-tab><span class="grow"></span>${ic('dots',10)}</div>
   <div class="head"><asset-logo s="26"></asset-logo><h2>Sample Icons (TMP_Sprite Asset)</h2><div class="e"><span class="i" style="gap:3px;height:13px">${ic('help',9)}${ic('dots',10)}</span><button class="b">Open</button></div></div>
   <div class="body"><div class="c"><section-head>Face Info <span style="font-weight:400">- v1.1.0</span><button class="b up" slot="end">Update Sprite Asset</button></section-head>
   <div class="rows">${['Point Size','Scale','Ascent Line','Baseline','Descent Line'].map((l,i)=>`<div class="r"><label for="k${i}">${l}</label><input class="f" id="k${i}" value="0"></div>`).join('')}</div>
   <section-head>Atlas &amp; Material</section-head>
   <div class="rows m"><div class="r"><span>Sprite Atlas</span><object-field i="atlas">SampleIcons</object-field></div><div class="r"><span>Default Material</span><object-field i="material">SampleIcons Material</object-field></div></div>
   <section-head>Fallback Sprite Assets</section-head><div class="lst"><div>Fallback Sprite Asset List</div><div>List is Empty</div></div>
   <div class="pm"><button aria-label="Add">${ic('plus',9,'#eee')}</button><button aria-label="Remove">${ic('minus',8,'#888')}</button></div>
   <section-head>Sprite Character Table</section-head>
   <div class="sr"><div class="q"><label for="ss">Sprite Search</label><span>${ic('search',7)}<input id="ss"></span></div><page-nav></page-nav></div>
   <div class="tb">${['clock','gem','heart','info','star','lightning'].map((n,i)=>`<sprite-entry i="${i}" n="${n}"></sprite-entry>`).join('')}<page-nav></page-nav></div>
   <section-head>Sprite Glyph Table</section-head>
   <div class="sr"><div class="q"><label for="gs">Sprite Search</label><span>${ic('search',7)}<input id="gs"></span></div></div></div>
   <div class="sb">${ic('caret',6)}<i></i>${ic('caret',6)}</div></div>
   <div class="al"><h3>Asset Labels</h3><div class="tg"><button aria-label="Edit labels">${ic('tag',8)}</button></div><div class="ab"><label for="b1">AssetBundle</label><span class="sel w"><select id="b1"><option>None</option></select>${ic('caret',7)}</span><span class="sel"><select aria-label="Variant"><option>None</option></select>${ic('caret',7)}</span></div></div>`}
}
customElements.define('inspector-panel',InspectorPanel);

class EditorApp extends Base{
  css(){return `:host{display:grid;grid-template-rows:auto auto 1fr;height:100vh;background:#141414}
  .m{display:grid;grid-template-columns:275px 157px 1fr 407px;column-gap:2px;min-height:0;padding:0 3px 3px 0}
  .ctr{display:grid;grid-template-rows:1fr auto;min-height:0;min-width:0;margin-right:1px}`}
  view(){return `<menu-bar></menu-bar><main-toolbar></main-toolbar><div class="m"><project-panel></project-panel><hierarchy-panel></hierarchy-panel><div class="ctr"><scene-panel></scene-panel><atlas-builder></atlas-builder></div><inspector-panel></inspector-panel></div>`}
}
customElements.define('editor-app',EditorApp);
</script>
</body>
</html>
